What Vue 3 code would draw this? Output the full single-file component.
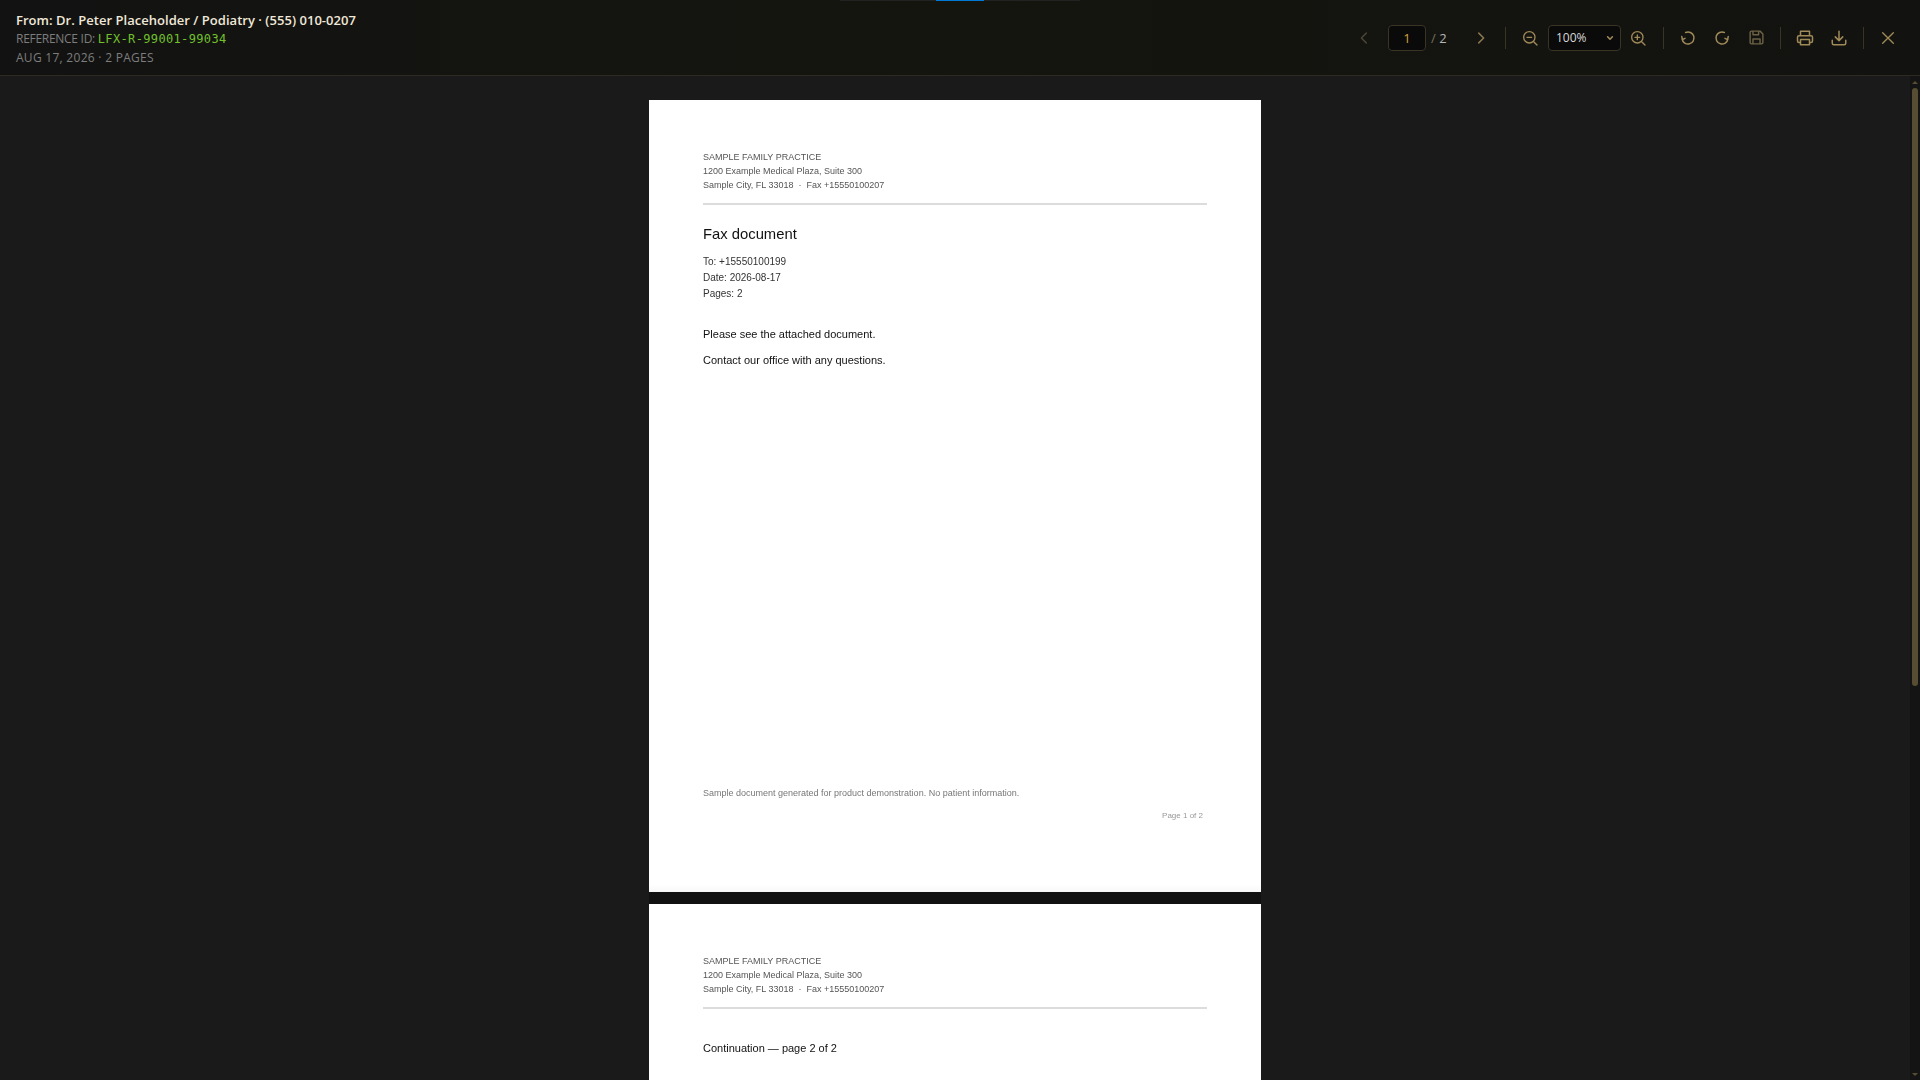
<script setup>
const pages = [1, 2]
</script>

<template>
  <div class="viewer">
    <div class="progress"><span class="progress-fill"></span></div>
    <header class="bar">
      <div class="meta">
        <div class="from">From: Dr. Peter Placeholder / Podiatry · (555) 010-0207</div>
        <div class="ref">REFERENCE ID: <span class="code">LFX-R-99001-99034</span></div>
        <div class="date">AUG 17, 2026 · 2 PAGES</div>
      </div>
      <div class="tools">
        <button class="ic dim" aria-label="Previous">
          <svg viewBox="0 0 24 24" width="18" height="18"><path d="M15 5.5L8.5 12l6.5 6.5"/></svg>
        </button>
        <div class="pageinput">1</div>
        <span class="total"><span class="slash">/</span> 2</span>
        <button class="ic next" aria-label="Next">
          <svg viewBox="0 0 24 24" width="18" height="18"><path d="M9 5.5l6.5 6.5L9 18.5"/></svg>
        </button>
        <i class="sep"></i>
        <button class="ic" aria-label="Zoom out">
          <svg viewBox="0 0 24 24" width="16" height="16"><circle cx="11" cy="11" r="8.5"/><path d="M7.5 11h7M17.5 17.5l5 5"/></svg>
        </button>
        <div class="zoomsel">100%<svg viewBox="0 0 10 10" width="8" height="8"><path d="M2 3.5l3 3 3-3"/></svg></div>
        <button class="ic" aria-label="Zoom in">
          <svg viewBox="0 0 24 24" width="16" height="16"><circle cx="11" cy="11" r="8.5"/><path d="M7.5 11h7M11 7.5v7M17.5 17.5l5 5"/></svg>
        </button>
        <i class="sep wide"></i>
        <button class="ic rot" aria-label="Rotate left">
          <svg viewBox="0 0 16 16" width="16" height="16"><path d="M5.6 2.5A6 6 0 1 1 2.1 9M1.8 6.6l.6 3 2.6-1.2"/></svg>
        </button>
        <button class="ic rot" aria-label="Rotate right">
          <svg viewBox="0 0 16 16" width="16" height="16"><path d="M10.4 2.5A6 6 0 1 0 13.9 9M14.2 6.6l-.6 3-2.6-1.2"/></svg>
        </button>
        <button class="ic faded" aria-label="Save">
          <svg viewBox="0 0 24 24" width="17" height="17"><path d="M3 5a2 2 0 0 1 2-2h12l4 4v12a2 2 0 0 1-2 2H5a2 2 0 0 1-2-2zM7 21v-7h10v7M7 3v5h8V3"/></svg>
        </button>
        <i class="sep"></i>
        <button class="ic" aria-label="Print">
          <svg viewBox="0 0 24 24" width="18" height="18"><path d="M6 9V3h12v6M6 18H4a2 2 0 0 1-2-2v-5a2 2 0 0 1 2-2h16a2 2 0 0 1 2 2v5a2 2 0 0 1-2 2h-2M6 14h12v7H6z"/></svg>
        </button>
        <button class="ic" aria-label="Download">
          <svg viewBox="0 0 24 24" width="18" height="18"><path d="M12 3v12M7 10.5l5 5 5-5M3 15v4a2 2 0 0 0 2 2h14a2 2 0 0 0 2-2v-4"/></svg>
        </button>
        <i class="sep"></i>
        <button class="ic" aria-label="Close">
          <svg viewBox="0 0 24 24" width="16" height="16"><path d="M4 4l16 16M20 4L4 20"/></svg>
        </button>
      </div>
    </header>

    <main class="scroller">
      <div class="pages">
        <article class="page">
          <div class="letterhead">
            <div>SAMPLE FAMILY PRACTICE</div>
            <div>1200 Example Medical Plaza, Suite 300</div>
            <div>Sample City, FL 33018 &nbsp;·&nbsp; Fax +15550100207</div>
          </div>
          <h1>Fax document</h1>
          <div class="facts">
            <div>To: +15550100199</div>
            <div>Date: 2026-08-17</div>
            <div>Pages: 2</div>
          </div>
          <p class="first">Please see the attached document.</p>
          <p>Contact our office with any questions.</p>
          <div class="note">Sample document generated for product demonstration. No patient information.</div>
          <div class="pageno">Page 1 of 2</div>
        </article>
        <article class="page">
          <div class="letterhead">
            <div>SAMPLE FAMILY PRACTICE</div>
            <div>1200 Example Medical Plaza, Suite 300</div>
            <div>Sample City, FL 33018 &nbsp;·&nbsp; Fax +15550100207</div>
          </div>
          <p class="cont">Continuation — page 2 of 2</p>
        </article>
      </div>
      <div class="scrollbar">
        <span class="arrow up"></span>
        <span class="thumb"></span>
        <span class="arrow down"></span>
      </div>
    </main>
  </div>
</template>

<style>
html, body { margin: 0; background: #1a1a1a; overflow: hidden; }
</style>

<style scoped>
.viewer { width: 1920px; height: 1080px; display: flex; flex-direction: column; background: #1a1a1a; position: relative; overflow: hidden; }
.progress { position: absolute; top: 0; left: 840px; width: 240px; height: 1px; background: #222; z-index: 2; }
.progress-fill { position: absolute; left: 96px; width: 48px; top: 0; height: 1px; background: #0078d4; }
.bar { height: 75px; flex: none; border-bottom: 1px solid #2e2a22; background: linear-gradient(90deg, #121212, #15150f 50%, #121210); display: flex; justify-content: space-between; align-items: flex-start; }
.meta { padding: 11px 0 0 16px; font-family: "Open Sans", sans-serif; font-size: 12px; line-height: 18px; color: #7d7d7d; }
.from { font-size: 13px; font-weight: 600; color: #f0e8d8; line-height: 19px; letter-spacing: .03px; }
.ref { letter-spacing: -.28px; margin-top: -.5px; }
.date { letter-spacing: .28px; margin-top: 1px; }
.code { font-family: "DejaVu Sans Mono", monospace; color: #72c02c; font-size: 12px; letter-spacing: .35px; }
.tools { display: flex; align-items: center; height: 75px; padding-right: 15px; }
.ic { width: 34px; height: 34px; padding: 0; border: 0; background: none; display: flex; align-items: center; justify-content: center; }
.ic svg, .zoomsel svg { fill: none; stroke: #a08a58; stroke-width: 2; stroke-linecap: round; stroke-linejoin: round; }
.ic.rot svg { stroke-width: 1.5; }
.dim svg { stroke: #4a4535 !important; }
.next svg { stroke: #8a7850 !important; }
.faded svg { stroke: #6e6245 !important; }
.pageinput { width: 38px; height: 26px; margin-left: 7px; box-sizing: border-box; border: 1px solid #3a3425; border-radius: 4px; background: #0a0a0a; color: #d9a03a; font: 13px/24px "Open Sans", sans-serif; text-align: center; }
.total { margin-left: 5px; width: 33px; font: 13px "Open Sans", sans-serif; color: #b5b5b5; }
.slash { color: #77705c; }
.sep { width: 1px; height: 22px; background: #3a3425; margin: 0 7px; }
.sep.wide { margin-left: 8px; }
.zoomsel { width: 73px; height: 26px; margin-left: 1px; box-sizing: border-box; border: 1px solid #3a3425; border-radius: 4px; background: #0a0a0a; color: #d8d8d8; font: 12px/24px "Open Sans", sans-serif; padding: 0 6px 0 7px; display: flex; align-items: center; justify-content: space-between; }
.scroller { flex: 1; position: relative; overflow: hidden; }
.pages { display: flex; flex-direction: column; gap: 12px; margin: 24px 0 0 649px; width: 612px; background: #111; }
.page { width: 612px; height: 792px; flex: none; box-sizing: border-box; padding: 50px 54px 0; background: #fff; color: #111; font-family: "Liberation Sans", Arial, sans-serif; box-shadow: inset 0 -10px 10px -10px rgba(0,0,0,.07); position: relative; will-change: transform; }
.letterhead { font-size: 9px; line-height: 14px; color: #555; border-bottom: 2px solid #dcdcdc; padding-bottom: 11px; }
h1 { font-size: 14.8px; font-weight: 400; margin: 20px 0 0; line-height: 18px; color: #111; }
.facts { margin-top: 11px; font-size: 10px; line-height: 16px; color: #333; }
p { margin: 0; font-size: 11px; line-height: 14px; color: #111; }
p.first { margin-top: 25px; margin-bottom: 12px; }
p.cont { margin-top: 32px; }
.note { position: absolute; left: 54px; top: 688px; font-size: 9px; color: #777; }
.pageno { position: absolute; right: 58px; top: 711px; font-size: 8px; color: #999; }
.scrollbar { position: absolute; top: 0; right: 0; bottom: 0; width: 10px; background: #141414; }
.thumb { position: absolute; top: 12px; left: 2px; width: 6px; height: 598px; border-radius: 3px; background: #574d33; }
.arrow { position: absolute; left: 2px; width: 0; height: 0; border-left: 3px solid transparent; border-right: 3px solid transparent; }
.up { top: 5px; border-bottom: 3px solid #574d33; }
.down { bottom: 4px; border-top: 3px solid #574d33; }
</style>
